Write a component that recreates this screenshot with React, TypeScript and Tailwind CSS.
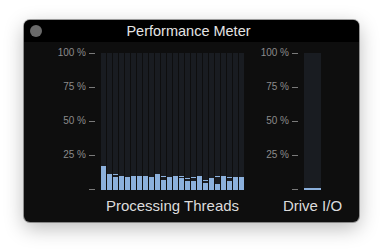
const threads = [
  { v: 24 }, { v: 16 }, { v: 13, peak: 16 }, { v: 14 }, { v: 13 }, { v: 14 },
  { v: 14 }, { v: 14 }, { v: 13 }, { v: 16 }, { v: 10, peak: 14 }, { v: 13 },
  { v: 14 }, { v: 12, peak: 14 }, { v: 9, peak: 12 }, { v: 9, peak: 13 }, { v: 14 }, { v: 7, peak: 10 },
  { v: 12 }, { v: 6, peak: 14 }, { v: 14 }, { v: 9, peak: 13 }, { v: 13 }, { v: 13 },
];

const ticks = ['100 %', '75 %', '50 %', '25 %', ''];

function Axis({ width }: { width: string }) {
  return (
    <div className={`flex h-[136px] flex-col justify-between ${width}`}>
      {ticks.map((t, i) => (
        <div key={i} className="flex h-0 items-center justify-end">
          <span className="text-[10px] leading-none text-[#8b8b8b]">{t}</span>
          <span className="ml-[3px] mr-[-9px] h-px w-[6px] shrink-0 bg-[#7a7a7a]" />
        </div>
      ))}
    </div>
  );
}

function Column({ v, peak, w }: { v: number; peak?: number; w: string }) {
  return (
    <div className={`relative h-[137px] bg-[#191c21] ${w}`}>
      {peak !== undefined && (
        <div className="absolute left-0 right-0 h-px bg-[#8bb0dc]" style={{ bottom: peak - 1 }} />
      )}
      <div className="absolute bottom-0 left-0 right-0 bg-[#8bb0dc]" style={{ height: v }} />
    </div>
  );
}

export default function App() {
  return (
    <div className="h-[251px] w-[384px] bg-white pl-[24px] pt-[20px] font-['Liberation_Sans',Arial,sans-serif]">
      <div className="w-[335px] overflow-hidden rounded-[6px] bg-[#0e0e0e] shadow-[0_0_0_1px_rgba(0,0,0,0.35),0_6px_20px_rgba(0,0,0,0.28)]">
        <div className="relative flex h-[22px] items-center justify-center bg-black pr-[6px]">
          <div className="absolute left-[6px] top-[5px] h-[12px] w-[12px] rounded-full bg-[#6a6a6a]" />
          <span className="text-[14.5px] leading-[22px] text-[#e4e4e4]">Performance Meter</span>
        </div>
        <div className="flex h-[180px] pt-[11px]">
          <div className="flex items-start">
            <Axis width="w-[62px]" />
            <div className="ml-[15px] flex flex-col items-center">
              <div className="flex gap-px">
                {threads.map((t, i) => (
                  <Column key={i} v={t.v} peak={t.peak} w="w-[5px]" />
                ))}
              </div>
              <div className="mt-[7px] whitespace-nowrap text-[15px] leading-[18px] text-[#dcdcdc]">Processing Threads</div>
            </div>
          </div>
          <div className="flex items-start">
            <Axis width="w-[45px]" />
            <div className="ml-[15px] flex w-[17px] flex-col items-center">
              <Column v={2} w="w-[17px]" />
              <div className="mt-[7px] whitespace-nowrap text-[15px] leading-[18px] text-[#dcdcdc]">Drive I/O</div>
            </div>
          </div>
        </div>
      </div>
    </div>
  );
}
